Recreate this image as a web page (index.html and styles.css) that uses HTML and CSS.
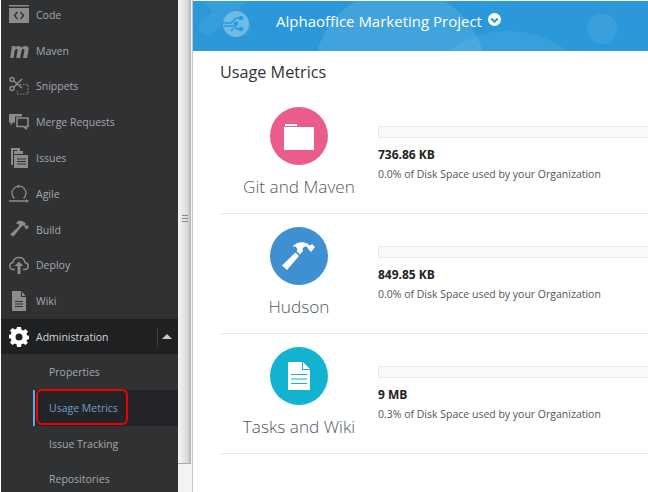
FILE: index.html
```html
<!DOCTYPE html>
<html lang="en">
<head>
    <meta charset="UTF-8">
    <title>Usage Metrics</title>
    <link rel="stylesheet" href="styles.css">
</head>
<body>
<div class="app">
    <nav class="sidebar">
        <ul class="menu">
            <li class="menu-item">
                <svg class="menu-icon" viewBox="0 0 20 20"><path fill="#8b8c8e" fill-rule="evenodd" d="M0 0h20v1.500H0zM0 3h20v15H0zM8 6.500 4.500 10.500 8 14.500l1-1-2.500-3L9 7.500zM12 6.500l-1 1 2.500 3L11 13.500l1 1 3.500-4z"/></svg>
                <span>Code</span>
            </li>
            <li class="menu-item">
                <svg class="menu-icon" viewBox="0 0 20 20"><path fill="#8b8c8e" d="M1 17 3 5h3.500l-.2 1.500C7.500 5.300 9 4.700 10.300 5c1.200.3 1.900 1 2.100 1.800C13.700 5.500 15.300 4.700 17 5c2 .4 3 1.800 2.600 4L18 17h-4l1.400-7.500c.2-1-.2-1.500-1-1.500-.9 0-1.700.6-1.900 1.700L11.200 17h-4l1.400-7.500c.2-1-.2-1.500-1-1.500-.9 0-1.700.7-1.900 1.700L4.500 17z"/></svg>
                <span>Maven</span>
            </li>
            <li class="menu-item">
                <svg class="menu-icon" viewBox="0 0 20 20"><g fill="none" stroke="#8b8c8e"><circle cx="3" cy="3.500" r="2" stroke-width="1.500"/><circle cx="3" cy="12.500" r="2" stroke-width="1.500"/><path stroke-width="1.500" d="M4.500 4.500 13 12M4.500 11.500 13 3"/><path stroke-width="1.200" stroke-dasharray="1.500 1.500" d="M11 8.500h8V18H8.500v-3"/></g></svg>
                <span>Snippets</span>
            </li>
            <li class="menu-item">
                <svg class="menu-icon" viewBox="0 0 20 20"><path fill="#8b8c8e" d="M0 2h13v2.500H6v6H4l-2.500 3v-3H0z"/><path fill="none" stroke="#8b8c8e" stroke-width="1.600" d="M8 6h11v8.500h-2v2l-2.500-2H8z"/></svg>
                <span>Merge Requests</span>
            </li>
            <li class="menu-item">
                <svg class="menu-icon" viewBox="0 0 20 20"><path fill="#8b8c8e" d="M2 0h9v2H4v15H2zM5 3h3V1h3v2h3v3H5zM5 7h14v13H5z"/><path stroke="#303133" stroke-width="1" d="M8 11h9M8 13.500h9M8 16h9"/></svg>
                <span>Issues</span>
            </li>
            <li class="menu-item">
                <svg class="menu-icon" viewBox="0 0 20 20"><path fill="none" stroke="#8b8c8e" stroke-width="1.300" d="M5.500 14.500A7 7 0 1 1 14.500 14.500M0 17h18"/><path fill="#8b8c8e" d="M10 .5 7.500 2.500 10 4.500zM17 15l3 2-3 2z"/></svg>
                <span>Agile</span>
            </li>
            <li class="menu-item">
                <svg class="menu-icon" viewBox="0 0 20 20"><path fill="#8b8c8e" d="M9 1c3-.8 6 .3 8 3l-1 1 1 1 1-1 2 2-2.500 2.500-2-2 .5-1-2-1-2 1.500-7.500 9.500L1 14.500 9.800 6.500 10 4.500 7 3.500z"/></svg>
                <span>Build</span>
            </li>
            <li class="menu-item">
                <svg class="menu-icon" viewBox="0 0 20 20"><path fill="none" stroke="#8b8c8e" stroke-width="1.500" d="M6 14.500H4.500C2 14.500 .8 12.800 .8 11c0-2 1.400-3.300 3.200-3.400C4.500 4.500 7 2.500 10 2.500c3.200 0 5.500 2.200 6 5 1.900.2 3.200 1.600 3.200 3.500 0 2-1.400 3.500-3.700 3.500H14"/><path fill="#8b8c8e" d="M10 6.500l4.500 4.500h-3v8h-3v-8h-3z"/></svg>
                <span>Deploy</span>
            </li>
            <li class="menu-item">
                <svg class="menu-icon" viewBox="0 0 20 20"><path fill="#8b8c8e" d="M3 0h9v6h5v14H3zM13 .5 16.500 5H13z"/><path stroke="#303133" stroke-width="1" d="M6 10.500h8M6 13h8M6 15.500h8"/></svg>
                <span>Wiki</span>
            </li>
            <li class="menu-item menu-open">
                <svg class="menu-icon" viewBox="0 0 20 20"><path fill="#fff" fill-rule="evenodd" d="M8 0h4l.5 2.700 1.700.7L16.500 2 19 4.500l-1.500 2.300.7 1.700 2.800.5v3l-2.800.5-.7 1.700L19 15.500 16.500 18l-2.300-1.500-1.700.7L12 20H8l-.5-2.800-1.700-.7L3.500 18 1 15.500l1.500-2.300-.7-1.700L-1 11V8l2.800-.5.7-1.700L1 3.500 3.500 1l2.300 1.500 1.700-.7zM10 6.500a3.500 3.500 0 1 0 0 7 3.500 3.500 0 0 0 0-7z"/></svg>
                <span>Administration</span>
                <i class="menu-caret"></i>
            </li>
            <li class="menu-item submenu-item"><span>Properties</span></li>
            <li class="menu-item submenu-item submenu-active">
                <span>Usage Metrics</span>
                <div class="callout"></div>
            </li>
            <li class="menu-item submenu-item"><span>Issue Tracking</span></li>
            <li class="menu-item submenu-item"><span>Repositories</span></li>
        </ul>
    </nav>
    <div class="splitter">
        <div class="splitter-thumb"><div class="splitter-grip"></div></div>
    </div>
    <main class="content">
        <header class="banner">
            <svg class="banner-cross" viewBox="0 0 64 40"><path fill="none" stroke="#fff" stroke-width="16" stroke-linecap="round" d="M14 -6 50 26M50 -6 14 26"/></svg>
            <div class="banner-circle circle-large"></div>
            <div class="banner-circle circle-low"></div>
            <div class="banner-circle circle-small"></div>
            <svg class="banner-logo" viewBox="0 0 26 26">
                <circle cx="13" cy="13" r="13" fill="#6dbbe6"/>
                <g fill="none" stroke="#2b99d9" stroke-width="1.500"><path d="M0 12h8l5-5h5M1 15h10l3 3h4M8 20l3-3"/></g>
                <g fill="#2b99d9"><circle cx="18" cy="7" r="2.300"/><circle cx="13" cy="12.500" r="2.300"/><circle cx="18" cy="18" r="2.300"/></g>
            </svg>
            <h1 class="banner-title">Alphaoffice Marketing Project</h1>
            <svg class="banner-chevron" viewBox="0 0 12 12"><circle cx="6" cy="6" r="6" fill="#fff"/><path fill="none" stroke="#2b99d9" stroke-width="2" d="M3 5l3 3 3-3"/></svg>
        </header>
        <section class="metrics">
            <h2 class="metrics-title">Usage Metrics</h2>
            <div class="metric">
                <div class="metric-app">
                    <div class="metric-icon icon-pink">
                        <svg viewBox="0 0 30 30" width="30" height="30"><path fill="#fff" d="M1 3h12v2H1zM0 6h30v23H0z"/></svg>
                    </div>
                    <div class="metric-name">Git and Maven</div>
                </div>
                <div class="metric-usage">
                    <div class="usage-bar"></div>
                    <div class="usage-size">736.86 KB</div>
                    <div class="usage-note">0.0% of Disk Space used by your Organization</div>
                </div>
            </div>
            <div class="metric">
                <div class="metric-app">
                    <div class="metric-icon icon-blue">
                        <svg viewBox="0 0 36 30" width="36" height="30"><path fill="#fff" d="M11 6C15 1 22 0 27 3l2 2-1.500 1.500-2-1C23.500 5 21.500 6.500 21.500 8.500L22 10l-3 3.500-3.500-3.500 1-1.500C16 6 13.500 5 11 6zM14.500 11.500 18 15 6 29 1 24.500zM26 6.500l5-3.500 3 3-4 5z"/></svg>
                    </div>
                    <div class="metric-name">Hudson</div>
                </div>
                <div class="metric-usage">
                    <div class="usage-bar"></div>
                    <div class="usage-size">849.85 KB</div>
                    <div class="usage-note">0.0% of Disk Space used by your Organization</div>
                </div>
            </div>
            <div class="metric">
                <div class="metric-app">
                    <div class="metric-icon icon-teal">
                        <svg viewBox="0 0 22 28" width="22" height="28"><path fill="#fff" d="M0 0h14v8h8v20H0zM15 0l7 7h-7z"/><path stroke="#12b3d0" stroke-width="1.200" d="M3 12.500h16M3 17h16M3 21.500h16"/></svg>
                    </div>
                    <div class="metric-name">Tasks and Wiki</div>
                </div>
                <div class="metric-usage">
                    <div class="usage-bar"></div>
                    <div class="usage-size">9 MB</div>
                    <div class="usage-note">0.3% of Disk Space used by your Organization</div>
                </div>
            </div>
        </section>
    </main>
</div>
</body>
</html>
```

FILE: styles.css
```css
html, body {
    margin: 0;
    padding: 0;
    height: 100%;
    overflow: hidden;
    background-color: #fff;
}
body {
    font-family: "Open Sans", "Noto Sans", sans-serif;
    color: #333;
}
.app {
    display: flex;
    height: 492px;
    padding-left: 1px;
    box-sizing: border-box;
}

/* left menu */
.sidebar {
    width: 177px;
    flex: none;
    background-color: #303133;
    overflow: hidden;
}
.menu {
    list-style: none;
    margin: -3px 0 0 0;
    padding: 0;
}
.menu-item {
    position: relative;
    display: flex;
    align-items: center;
    height: 35.8px;
    padding-left: 8px;
    color: #a6a8ab;
    font-size: 10.5px;
}
.menu-icon {
    width: 20px;
    height: 20px;
    margin-right: 7px;
    flex: none;
}
.menu-open {
    height: 35px;
    background-color: #1f2022;
    color: #d5d6d8;
}
.menu-caret {
    position: absolute;
    right: 0;
    top: 8px;
    width: 20px;
    height: 20px;
    border-left: 1px solid #3c3d40;
}
.menu-caret::after {
    content: "";
    position: absolute;
    left: 4px;
    top: 7px;
    border-left: 5px solid transparent;
    border-right: 5px solid transparent;
    border-bottom: 5px solid #c8c9cb;
}
.submenu-item {
    padding-left: 48px;
}
.submenu-active {
    background-color: #232427;
    color: #6f9fd0;
    margin-left: 32px;
    border-left: 2px solid #5fa8e0;
    box-sizing: border-box;
    padding-left: 14px;
}
.callout {
    position: absolute;
    left: 1px;
    top: -1px;
    width: 88px;
    height: 32px;
    border: 2px solid #f00000;
    border-radius: 6px;
}

/* bar between menu and content */
.splitter {
    width: 14px;
    flex: none;
    background-color: #f3f3f3;
}
.splitter-thumb {
    display: flex;
    align-items: center;
    justify-content: center;
    width: 13px;
    height: 463px;
    background: linear-gradient(to right, #f4f4f4, #dcdce0 70%, #b4b4b6);
    border-bottom: 1px solid #a9a9ab;
}
.splitter-grip {
    width: 6px;
    height: 5px;
    margin-top: -26px;
    border-top: 1px solid #888;
    border-bottom: 1px solid #888;
    background: linear-gradient(#888, #888) center / 100% 1px no-repeat;
}

/* content */
.content {
    flex: 1;
    min-width: 0;
    border-left: 1px solid #c4c4c6;
}
.banner {
    position: relative;
    display: flex;
    align-items: center;
    height: 40px;
    margin-top: 1px;
    padding: 0 0 10px 30px;
    background-color: #2b99d9;
    overflow: hidden;
}
.banner-cross {
    position: absolute;
    left: 0;
    top: 0;
    width: 64px;
    height: 40px;
    opacity: 0.05;
}
.banner-circle {
    position: absolute;
    border-radius: 50%;
    background-color: rgba(255, 255, 255, 0.1);
}
.circle-large {
    left: 121px;
    top: -12px;
    width: 172px;
    height: 172px;
}
.circle-low {
    left: 215px;
    top: 30px;
    width: 200px;
    height: 200px;
    background-color: rgba(255, 255, 255, 0.06);
}
.circle-small {
    left: 394px;
    top: 13px;
    width: 30px;
    height: 30px;
    background-color: rgba(255, 255, 255, 0.07);
}
.banner-logo {
    position: relative;
    width: 26px;
    height: 26px;
    margin: 6px 27px 0 0;
}
.banner-title {
    position: relative;
    margin: 0 6px 0 0;
    color: #fff;
    font-size: 15px;
    font-weight: 400;
}
.banner-chevron {
    position: relative;
    width: 13px;
    height: 13px;
    margin-top: -4px;
}
.metrics {
    padding: 0 0 0 27px;
}
.metrics-title {
    margin: 10px 0 11px 0;
    font-size: 16.2px;
    line-height: 22px;
    font-weight: 400;
    color: #333;
}
.metric {
    display: flex;
    height: 119px;
    border-bottom: 1px solid #e3e7ea;
    box-sizing: content-box;
}
.metric-app {
    width: 158px;
    flex: none;
    padding-top: 13px;
    text-align: center;
}
.metric-icon {
    display: flex;
    align-items: center;
    justify-content: center;
    width: 58px;
    height: 58px;
    margin: 0 auto;
    border-radius: 50%;
}
.icon-pink { background-color: #ea5c8a; }
.icon-blue { background-color: #3f90d0; }
.icon-teal { background-color: #12b3d0; }
.metric-name {
    margin-top: 10px;
    font-size: 17.2px;
    font-weight: 300;
    line-height: 24px;
    color: #4f5963;
}
.metric-usage {
    flex: 1;
    min-width: 0;
    padding-top: 32px;
}
.usage-bar {
    height: 10px;
    border: 1px solid #e6eaed;
    border-right: 0;
    border-radius: 2px 0 0 2px;
    background-color: #f7f9fb;
}
.usage-size {
    margin-top: 9px;
    font-size: 12px;
    font-weight: 700;
    line-height: 16px;
    color: #222;
}
.usage-note {
    margin-top: 4px;
    font-size: 10.5px;
    line-height: 15px;
    color: #555;
    white-space: nowrap;
}
```
